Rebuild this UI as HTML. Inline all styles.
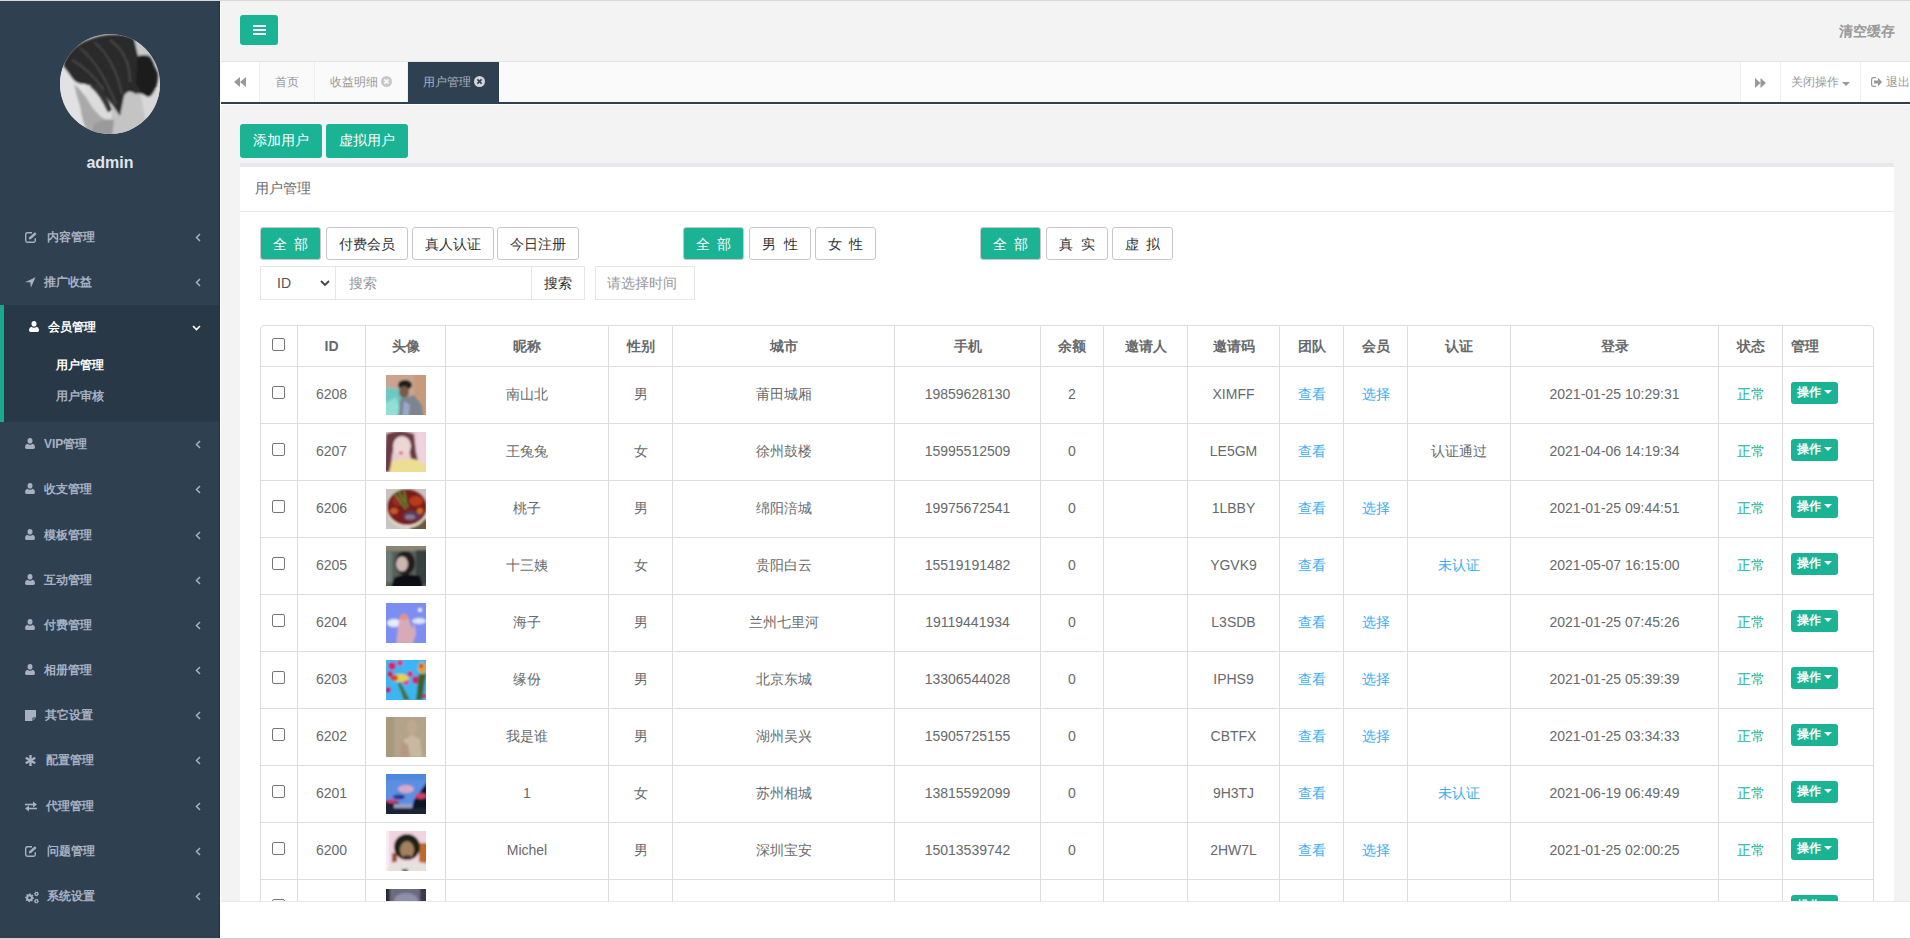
<!DOCTYPE html><html><head><meta charset="utf-8"><title>用户管理</title><style>
*{box-sizing:border-box}
html,body{margin:0;padding:0}
body{width:1910px;height:939px;overflow:hidden;position:relative;background:#f3f3f4;font-family:"Liberation Sans", sans-serif;color:#676a6c;font-size:14px}
#topline{position:absolute;left:0;top:0;width:1910px;height:1px;background:#d8d8d8}
#botline{position:absolute;left:0;top:938px;width:1910px;height:1px;background:#cdd1d8}
#side{position:absolute;left:0;top:1px;width:220px;height:937px;background:#2f4050;border-right:1px solid #26323f}
#avatar{position:absolute;left:60px;top:33px;width:100px;height:100px}
#uname{position:absolute;left:0;width:220px;top:152px;text-align:center;color:#dfe4ed;font-weight:bold;font-size:16px;line-height:20px}
.ni{position:absolute;left:0;width:219px;height:45px}
.ni .ic{position:absolute;top:17px;line-height:0}
.ni .nt{position:absolute;top:14px;font-size:12px;font-weight:bold;line-height:17px;white-space:nowrap}
#activebg{position:absolute;left:0;top:304px;width:219px;height:117px;background:#293846;border-left:4px solid #19aa8d}
.sub{position:absolute;left:56px;font-size:12px;line-height:17px;color:#a7b1c2;font-weight:bold}
#whitecol{position:absolute;left:220px;top:1px;width:1px;height:937px;background:#fff}
#header{position:absolute;left:221px;top:1px;width:1689px;height:61px;background:#f3f3f4;border-bottom:1px solid #e2e4e6}
#menubtn{position:absolute;left:240px;top:15px;width:38px;height:30px;background:#1ab394;border-radius:3px}
#menubtn i{position:absolute;left:13px;width:13px;height:2px;background:#fff}
#clear{position:absolute;left:1839px;top:22px;font-size:14px;color:#999;font-weight:bold;line-height:18px}
#tabs{position:absolute;left:221px;top:62px;width:1689px;height:42px;background:#fafafa;border-bottom:2px solid #2f4050}
.tab{position:absolute;top:0;height:40px;line-height:40px;font-size:12px;color:#999;border-right:1px solid #eee;white-space:nowrap}
#whiterow{position:absolute;left:221px;top:104px;width:1689px;height:1px;background:#fff}
.btn{position:absolute;height:33px;border:1px solid #c8c8c8;border-radius:3px;background:#fff;color:#333;text-align:center;line-height:31px;padding-top:1px;font-size:14px;white-space:nowrap}
.btn.g{background:#1ab394;border-color:#cbc6c6;color:#fff}
#ibox{position:absolute;left:240px;top:163px;width:1654px;height:800px;background:#fff;border-top:4px solid #e7eaec}
#ititle{position:absolute;left:255px;top:179px;font-size:14px;color:#676a6c;line-height:18px}
#tline{position:absolute;left:240px;top:211px;width:1654px;height:1px;background:#e7eaec}
.inp{position:absolute;top:266px;height:34px;border:1px solid #e5e6e7;background:#fff;font-size:14px;line-height:32px;white-space:nowrap}
#tframe{position:absolute;border:1px solid #dddddd;border-radius:4px}
.vl{position:absolute;width:1px;background:#dddddd}
.hl{position:absolute;height:1px;background:#dddddd}
.cell{position:absolute;text-align:center;font-size:14px;white-space:nowrap;color:#676a6c}
.cb{display:inline-block;width:13px;height:13px;border:1px solid #767676;border-radius:2px;background:#fff}
.opbtn{position:absolute;width:47px;height:22px;background:#1ab394;border-radius:3px;color:#fff;font-size:12px;font-weight:bold;line-height:20px;padding-left:6px;white-space:nowrap}
.caret{display:inline-block;width:0;height:0;border-top:4px solid #fff;border-left:4px solid transparent;border-right:4px solid transparent;vertical-align:middle;margin-left:3px;position:relative;top:-1px}
#footer{position:absolute;left:221px;top:901px;width:1689px;height:37px;background:#fff;border-top:1px solid #e7eaec}
</style></head><body>
<div id="topline"></div>
<div id="side">
<div id="avatar"><svg width="100" height="100" viewBox="0 0 100 100"><defs><clipPath id="pc"><circle cx="50" cy="50" r="50"/></clipPath><filter id="pb" x="-20%" y="-20%" width="140%" height="140%"><feGaussianBlur stdDeviation="0.9"/></filter></defs><g clip-path="url(#pc)"><rect width="100" height="100" fill="#dcdcdc"/><g filter="url(#pb)"><rect x="-5" y="30" width="30" height="75" fill="#e2e2e4"/><rect x="75" y="55" width="30" height="50" fill="#d8d8d8"/><path d="M14 50 Q22 56 30 70 Q40 86 52 88 L62 100 L30 104 Q22 88 20 72 Q16 60 14 50z" fill="#a9a9a9"/><path d="M50 58 L80 56 L86 90 L70 104 L44 104 Q56 88 50 58z" fill="#c4c4c4"/><path d="M34 90 Q44 84 54 86 L52 104 L30 104z" fill="#9a9a9a"/><path d="M3 32 Q8 10 40 2 Q76 -4 86 16 Q98 30 96 52 Q92 66 86 62 Q80 58 76 60 Q68 54 64 62 Q62 72 60 82 Q52 70 44 60 Q34 50 24 50 Q16 50 12 44 Q8 38 3 32z" fill="#2a2a2a"/><path d="M74 4 Q90 6 102 24 L100 30 Q90 18 78 22z" fill="#c8c8c8"/><path d="M78 22 Q92 22 98 40 Q98 58 88 62 Q80 60 76 48z" fill="#1c1c1c"/><path d="M30 52 Q40 60 48 78 L52 76 Q46 60 38 50z" fill="#303030"/><path d="M20 14 Q40 30 56 70 M34 8 Q54 24 62 60 M12 26 Q30 36 44 56 M50 6 Q70 20 70 48" fill="none" stroke="#4c4c4c" stroke-width="1.6"/></g></g></svg></div>
<div id="uname">admin</div>
<div class="ni" style="top:214.0px"><span class="ic" style="left:25px;top:17px"><svg width="13" height="11" viewBox="0 0 13 11"><path d="M7 0.7H2.4Q0.7 0.7 0.7 2.4V8.6Q0.7 10.3 2.4 10.3H8.6Q10.3 10.3 10.3 8.6V6.2" fill="none" stroke="#a7b1c2" stroke-width="1.4"/><path d="M3.8 7.6l0.5-2.3 5.5-5.1 1.8 1.8-5.5 5.1z" fill="#a7b1c2"/></svg></span><span class="nt" style="left:46.5px;color:#a7b1c2">内容管理</span><svg style="position:absolute;left:195px;top:18px" width="6" height="9" viewBox="0 0 6 9"><path d="M5 1L1.5 4.5 5 8" fill="none" stroke="#a7b1c2" stroke-width="1.5"/></svg></div>
<div class="ni" style="top:259.3px"><span class="ic" style="left:25px;top:17px"><svg width="11" height="11" viewBox="0 0 11 11"><path d="M10.5 0.2L0 5.2h5.3l0.6 5.6z" fill="#a7b1c2"/></svg></span><span class="nt" style="left:44px;color:#a7b1c2">推广收益</span><svg style="position:absolute;left:195px;top:18px" width="6" height="9" viewBox="0 0 6 9"><path d="M5 1L1.5 4.5 5 8" fill="none" stroke="#a7b1c2" stroke-width="1.5"/></svg></div>
<div id="activebg"></div>
<div class="ni" style="top:304.0px"><span class="ic" style="left:29px;top:16px"><svg width="10" height="11" viewBox="0 0 10 11"><ellipse cx="5" cy="2.8" rx="2.5" ry="2.8" fill="#fff"/><path d="M0 9.3Q0 6.3 2.2 5.7Q3.5 6.7 5 6.7Q6.5 6.7 7.8 5.7Q10 6.3 10 9.3Q10 11 8.4 11H1.6Q0 11 0 9.3z" fill="#fff"/></svg></span><span class="nt" style="left:48px;color:#fff">会员管理</span><svg style="position:absolute;left:192px;top:20px" width="9" height="6" viewBox="0 0 9 6"><path d="M1 1l3.5 3.5L8 1" fill="none" stroke="#fff" stroke-width="1.6"/></svg></div>
<div class="sub" style="top:356px;color:#fff;font-weight:bold">用户管理</div>
<div class="sub" style="top:387px">用户审核</div>
<div class="ni" style="top:421.2px"><span class="ic" style="left:25px;top:16px"><svg width="10" height="11" viewBox="0 0 10 11"><ellipse cx="5" cy="2.8" rx="2.5" ry="2.8" fill="#a7b1c2"/><path d="M0 9.3Q0 6.3 2.2 5.7Q3.5 6.7 5 6.7Q6.5 6.7 7.8 5.7Q10 6.3 10 9.3Q10 11 8.4 11H1.6Q0 11 0 9.3z" fill="#a7b1c2"/></svg></span><span class="nt" style="left:44px;color:#a7b1c2">VIP管理</span><svg style="position:absolute;left:195px;top:18px" width="6" height="9" viewBox="0 0 6 9"><path d="M5 1L1.5 4.5 5 8" fill="none" stroke="#a7b1c2" stroke-width="1.5"/></svg></div>
<div class="ni" style="top:466.4px"><span class="ic" style="left:25px;top:16px"><svg width="10" height="11" viewBox="0 0 10 11"><ellipse cx="5" cy="2.8" rx="2.5" ry="2.8" fill="#a7b1c2"/><path d="M0 9.3Q0 6.3 2.2 5.7Q3.5 6.7 5 6.7Q6.5 6.7 7.8 5.7Q10 6.3 10 9.3Q10 11 8.4 11H1.6Q0 11 0 9.3z" fill="#a7b1c2"/></svg></span><span class="nt" style="left:44px;color:#a7b1c2">收支管理</span><svg style="position:absolute;left:195px;top:18px" width="6" height="9" viewBox="0 0 6 9"><path d="M5 1L1.5 4.5 5 8" fill="none" stroke="#a7b1c2" stroke-width="1.5"/></svg></div>
<div class="ni" style="top:511.6px"><span class="ic" style="left:25px;top:16px"><svg width="10" height="11" viewBox="0 0 10 11"><ellipse cx="5" cy="2.8" rx="2.5" ry="2.8" fill="#a7b1c2"/><path d="M0 9.3Q0 6.3 2.2 5.7Q3.5 6.7 5 6.7Q6.5 6.7 7.8 5.7Q10 6.3 10 9.3Q10 11 8.4 11H1.6Q0 11 0 9.3z" fill="#a7b1c2"/></svg></span><span class="nt" style="left:44px;color:#a7b1c2">模板管理</span><svg style="position:absolute;left:195px;top:18px" width="6" height="9" viewBox="0 0 6 9"><path d="M5 1L1.5 4.5 5 8" fill="none" stroke="#a7b1c2" stroke-width="1.5"/></svg></div>
<div class="ni" style="top:556.7px"><span class="ic" style="left:25px;top:16px"><svg width="10" height="11" viewBox="0 0 10 11"><ellipse cx="5" cy="2.8" rx="2.5" ry="2.8" fill="#a7b1c2"/><path d="M0 9.3Q0 6.3 2.2 5.7Q3.5 6.7 5 6.7Q6.5 6.7 7.8 5.7Q10 6.3 10 9.3Q10 11 8.4 11H1.6Q0 11 0 9.3z" fill="#a7b1c2"/></svg></span><span class="nt" style="left:44px;color:#a7b1c2">互动管理</span><svg style="position:absolute;left:195px;top:18px" width="6" height="9" viewBox="0 0 6 9"><path d="M5 1L1.5 4.5 5 8" fill="none" stroke="#a7b1c2" stroke-width="1.5"/></svg></div>
<div class="ni" style="top:601.9px"><span class="ic" style="left:25px;top:16px"><svg width="10" height="11" viewBox="0 0 10 11"><ellipse cx="5" cy="2.8" rx="2.5" ry="2.8" fill="#a7b1c2"/><path d="M0 9.3Q0 6.3 2.2 5.7Q3.5 6.7 5 6.7Q6.5 6.7 7.8 5.7Q10 6.3 10 9.3Q10 11 8.4 11H1.6Q0 11 0 9.3z" fill="#a7b1c2"/></svg></span><span class="nt" style="left:44px;color:#a7b1c2">付费管理</span><svg style="position:absolute;left:195px;top:18px" width="6" height="9" viewBox="0 0 6 9"><path d="M5 1L1.5 4.5 5 8" fill="none" stroke="#a7b1c2" stroke-width="1.5"/></svg></div>
<div class="ni" style="top:647.0px"><span class="ic" style="left:25px;top:16px"><svg width="10" height="11" viewBox="0 0 10 11"><ellipse cx="5" cy="2.8" rx="2.5" ry="2.8" fill="#a7b1c2"/><path d="M0 9.3Q0 6.3 2.2 5.7Q3.5 6.7 5 6.7Q6.5 6.7 7.8 5.7Q10 6.3 10 9.3Q10 11 8.4 11H1.6Q0 11 0 9.3z" fill="#a7b1c2"/></svg></span><span class="nt" style="left:44px;color:#a7b1c2">相册管理</span><svg style="position:absolute;left:195px;top:18px" width="6" height="9" viewBox="0 0 6 9"><path d="M5 1L1.5 4.5 5 8" fill="none" stroke="#a7b1c2" stroke-width="1.5"/></svg></div>
<div class="ni" style="top:692.2px"><span class="ic" style="left:25px;top:17px"><svg width="11" height="11" viewBox="0 0 11 11"><path d="M0 0h11v7.6L7.6 11H0z" fill="#a7b1c2"/><path d="M7.9 11V7.9H11" fill="none" stroke="#2f4050" stroke-width="0.9"/></svg></span><span class="nt" style="left:45px;color:#a7b1c2">其它设置</span><svg style="position:absolute;left:195px;top:18px" width="6" height="9" viewBox="0 0 6 9"><path d="M5 1L1.5 4.5 5 8" fill="none" stroke="#a7b1c2" stroke-width="1.5"/></svg></div>
<div class="ni" style="top:737.3px"><span class="ic" style="left:25px;top:17px"><svg width="11" height="11" viewBox="0 0 11 11"><g stroke="#a7b1c2" stroke-width="2.4"><path d="M5.5 0v11"/><path d="M0.8 2.8l9.4 5.4"/><path d="M0.8 8.2l9.4-5.4"/></g></svg></span><span class="nt" style="left:45.5px;color:#a7b1c2">配置管理</span><svg style="position:absolute;left:195px;top:18px" width="6" height="9" viewBox="0 0 6 9"><path d="M5 1L1.5 4.5 5 8" fill="none" stroke="#a7b1c2" stroke-width="1.5"/></svg></div>
<div class="ni" style="top:782.5px"><span class="ic" style="left:25px;top:17px"><svg width="12" height="11" viewBox="0 0 12 11"><path d="M0 3.5h9" stroke="#a7b1c2" stroke-width="1.6"/><path d="M8 0.5l4 3-4 3z" fill="#a7b1c2"/><path d="M12 7.5h-9" stroke="#a7b1c2" stroke-width="1.6"/><path d="M4 4.5l-4 3 4 3z" fill="#a7b1c2"/></svg></span><span class="nt" style="left:46.3px;color:#a7b1c2">代理管理</span><svg style="position:absolute;left:195px;top:18px" width="6" height="9" viewBox="0 0 6 9"><path d="M5 1L1.5 4.5 5 8" fill="none" stroke="#a7b1c2" stroke-width="1.5"/></svg></div>
<div class="ni" style="top:827.6px"><span class="ic" style="left:25px;top:17px"><svg width="13" height="11" viewBox="0 0 13 11"><path d="M7 0.7H2.4Q0.7 0.7 0.7 2.4V8.6Q0.7 10.3 2.4 10.3H8.6Q10.3 10.3 10.3 8.6V6.2" fill="none" stroke="#a7b1c2" stroke-width="1.4"/><path d="M3.8 7.6l0.5-2.3 5.5-5.1 1.8 1.8-5.5 5.1z" fill="#a7b1c2"/></svg></span><span class="nt" style="left:46.5px;color:#a7b1c2">问题管理</span><svg style="position:absolute;left:195px;top:18px" width="6" height="9" viewBox="0 0 6 9"><path d="M5 1L1.5 4.5 5 8" fill="none" stroke="#a7b1c2" stroke-width="1.5"/></svg></div>
<div class="ni" style="top:872.8px"><span class="ic" style="left:25px;top:17px"><svg width="14" height="13" viewBox="0 0 14.2 12.6"><path fill-rule="evenodd" d="M9.20 6.60 L9.11 7.50 L7.83 7.94 L7.51 8.54 L7.85 9.85 L7.16 10.42 L5.94 9.83 L5.28 10.03 L4.60 11.20 L3.70 11.11 L3.26 9.83 L2.66 9.51 L1.35 9.85 L0.78 9.16 L1.37 7.94 L1.17 7.28 L0.00 6.60 L0.09 5.70 L1.37 5.26 L1.69 4.66 L1.35 3.35 L2.04 2.78 L3.26 3.37 L3.92 3.17 L4.60 2.00 L5.50 2.09 L5.94 3.37 L6.54 3.69 L7.85 3.35 L8.42 4.04 L7.83 5.26 L8.03 5.92Z M6.00 6.60 A1.4 1.4 0 1 0 3.20 6.60 A1.4 1.4 0 1 0 6.00 6.60Z M14.20 2.60 L14.11 3.27 L13.25 3.55 L12.94 3.94 L12.90 4.85 L12.27 5.11 L11.60 4.50 L11.11 4.44 L10.30 4.85 L9.76 4.44 L9.95 3.55 L9.76 3.09 L9.00 2.60 L9.09 1.93 L9.95 1.65 L10.26 1.26 L10.30 0.35 L10.93 0.09 L11.60 0.70 L12.09 0.76 L12.90 0.35 L13.44 0.76 L13.25 1.65 L13.44 2.11Z M12.40 2.60 A0.8 0.8 0 1 0 10.80 2.60 A0.8 0.8 0 1 0 12.40 2.60Z M14.20 10.00 L14.11 10.67 L13.25 10.95 L12.94 11.34 L12.90 12.25 L12.27 12.51 L11.60 11.90 L11.11 11.84 L10.30 12.25 L9.76 11.84 L9.95 10.95 L9.76 10.49 L9.00 10.00 L9.09 9.33 L9.95 9.05 L10.26 8.66 L10.30 7.75 L10.93 7.49 L11.60 8.10 L12.09 8.16 L12.90 7.75 L13.44 8.16 L13.25 9.05 L13.44 9.51Z M12.40 10.00 A0.8 0.8 0 1 0 10.80 10.00 A0.8 0.8 0 1 0 12.40 10.00Z" fill="#a7b1c2"/></svg></span><span class="nt" style="left:47.4px;color:#a7b1c2">系统设置</span><svg style="position:absolute;left:195px;top:18px" width="6" height="9" viewBox="0 0 6 9"><path d="M5 1L1.5 4.5 5 8" fill="none" stroke="#a7b1c2" stroke-width="1.5"/></svg></div>
</div>
<div id="whitecol"></div>
<div id="header"></div>
<div id="menubtn"><i style="top:10px"></i><i style="top:14px"></i><i style="top:18px"></i></div>
<div id="clear">清空缓存</div>
<div id="tabs">
<div class="tab" style="left:0;width:39px;background:#fff;border-right:1px solid #eee;text-align:center"><svg style="position:absolute;left:13px;top:15px" width="12" height="10" viewBox="0 0 12 10"><path d="M6 0L0 5l6 5zM12 0L6 5l6 5z" fill="#999"/></svg></div>
<div class="tab" style="left:39px;width:55px;padding-left:15px">首页</div>
<div class="tab" style="left:94px;width:93px;padding-left:15px">收益明细</div><svg style="position:absolute;left:160px;top:14px" width="11" height="11" viewBox="0 0 12 12"><circle cx="6" cy="6" r="6" fill="#c8c8c8"/><path d="M3.7 3.7l4.6 4.6M8.3 3.7l-4.6 4.6" stroke="#fafafa" stroke-width="1.7"/></svg>
<div class="tab" style="left:187px;width:91px;padding-left:15px;background:#2f4050;color:#a7b1c2;border-right:0">用户管理</div><svg style="position:absolute;left:253px;top:14px" width="11" height="11" viewBox="0 0 12 12"><circle cx="6" cy="6" r="6" fill="#d2d4d8"/><path d="M3.7 3.7l4.6 4.6M8.3 3.7l-4.6 4.6" stroke="#2f4050" stroke-width="1.7"/></svg>
<div class="tab" style="left:1519px;width:40px;background:#fff;border-left:1px solid #eee;border-right:0"><svg style="position:absolute;left:14px;top:16px" width="11" height="10" viewBox="0 0 11 10"><path d="M0 0l5.5 5-5.5 5zM5.5 0l5.5 5-5.5 5z" fill="#999"/></svg></div>
<div class="tab" style="left:1559px;width:80px;background:#fff;border-left:1px solid #eee;border-right:0;padding-left:10px">关闭操作<span class="caret" style="border-top-color:#999;margin-left:3px;top:1px"></span></div>
<div class="tab" style="left:1639px;width:50px;background:#fff;border-left:1px solid #eee;border-right:0;padding-left:25px">退出</div><svg style="position:absolute;left:1650px;top:15px" width="12" height="10" viewBox="0 0 12 10"><path d="M5 0.6H2.2Q0.6 0.6 0.6 2.2V7.8Q0.6 9.4 2.2 9.4H5" fill="none" stroke="#999" stroke-width="1.2"/><path d="M3 3.6H7V0.4L11 5 7 9.6V6.4H3z" fill="#999"/></svg>
</div>
<div id="whiterow"></div>
<div class="btn g" style="left:240px;top:124px;width:82px;height:34px;line-height:33px;padding-top:0;border:0">添加用户</div>
<div class="btn g" style="left:326px;top:124px;width:82px;height:34px;line-height:33px;padding-top:0;border:0">虚拟用户</div>
<div id="ibox"></div><div id="ititle">用户管理</div><div id="tline"></div>
<div class="btn g" style="left:260px;top:227px;width:61px">全&nbsp;&nbsp;部</div>
<div class="btn" style="left:326px;top:227px;width:82px">付费会员</div>
<div class="btn" style="left:412px;top:227px;width:82px">真人认证</div>
<div class="btn" style="left:497px;top:227px;width:82px">今日注册</div>
<div class="btn g" style="left:683px;top:227px;width:61px">全&nbsp;&nbsp;部</div>
<div class="btn" style="left:749px;top:227px;width:62px">男&nbsp;&nbsp;性</div>
<div class="btn" style="left:815px;top:227px;width:61px">女&nbsp;&nbsp;性</div>
<div class="btn g" style="left:980px;top:227px;width:61px">全&nbsp;&nbsp;部</div>
<div class="btn" style="left:1046px;top:227px;width:62px">真&nbsp;&nbsp;实</div>
<div class="btn" style="left:1112px;top:227px;width:61px">虚&nbsp;&nbsp;拟</div>
<div class="inp" style="left:260px;width:76px;padding-left:16px;color:#555">ID<svg style="position:absolute;left:59px;top:13px" width="10" height="7" viewBox="0 0 10 7"><path d="M1 1l4 4 4-4" fill="none" stroke="#444" stroke-width="1.8"/></svg></div>
<div class="inp" style="left:335px;width:197px;padding-left:13px;color:#999">搜索</div>
<div class="inp" style="left:531px;width:54px;text-align:center;color:#333">搜索</div>
<div class="inp" style="left:595px;width:100px;padding-left:11px;color:#999">请选择时间</div>
<div id="tframe" style="left:260px;top:325px;width:1614px;height:586px"></div>
<div class="vl" style="left:297px;top:325px;height:576px"></div>
<div class="vl" style="left:365px;top:325px;height:576px"></div>
<div class="vl" style="left:445px;top:325px;height:576px"></div>
<div class="vl" style="left:608px;top:325px;height:576px"></div>
<div class="vl" style="left:672px;top:325px;height:576px"></div>
<div class="vl" style="left:894px;top:325px;height:576px"></div>
<div class="vl" style="left:1040px;top:325px;height:576px"></div>
<div class="vl" style="left:1103px;top:325px;height:576px"></div>
<div class="vl" style="left:1187px;top:325px;height:576px"></div>
<div class="vl" style="left:1279px;top:325px;height:576px"></div>
<div class="vl" style="left:1343px;top:325px;height:576px"></div>
<div class="vl" style="left:1407px;top:325px;height:576px"></div>
<div class="vl" style="left:1510px;top:325px;height:576px"></div>
<div class="vl" style="left:1718px;top:325px;height:576px"></div>
<div class="vl" style="left:1782px;top:325px;height:576px"></div>
<div class="hl" style="left:260px;top:366px;width:1613px"></div>
<div class="hl" style="left:260px;top:423px;width:1613px"></div>
<div class="hl" style="left:260px;top:480px;width:1613px"></div>
<div class="hl" style="left:260px;top:537px;width:1613px"></div>
<div class="hl" style="left:260px;top:594px;width:1613px"></div>
<div class="hl" style="left:260px;top:651px;width:1613px"></div>
<div class="hl" style="left:260px;top:708px;width:1613px"></div>
<div class="hl" style="left:260px;top:765px;width:1613px"></div>
<div class="hl" style="left:260px;top:822px;width:1613px"></div>
<div class="hl" style="left:260px;top:879px;width:1613px"></div>
<span class="cb" style="position:absolute;left:272px;top:338px"></span>
<div class="cell" style="left:261px;width:36px;top:326px;height:40px;line-height:40px;font-weight:bold;color:#676a6c"></div>
<div class="cell" style="left:298px;width:67px;top:326px;height:40px;line-height:40px;font-weight:bold;color:#676a6c">ID</div>
<div class="cell" style="left:366px;width:79px;top:326px;height:40px;line-height:40px;font-weight:bold;color:#676a6c">头像</div>
<div class="cell" style="left:446px;width:162px;top:326px;height:40px;line-height:40px;font-weight:bold;color:#676a6c">昵称</div>
<div class="cell" style="left:609px;width:63px;top:326px;height:40px;line-height:40px;font-weight:bold;color:#676a6c">性别</div>
<div class="cell" style="left:673px;width:221px;top:326px;height:40px;line-height:40px;font-weight:bold;color:#676a6c">城市</div>
<div class="cell" style="left:895px;width:145px;top:326px;height:40px;line-height:40px;font-weight:bold;color:#676a6c">手机</div>
<div class="cell" style="left:1041px;width:62px;top:326px;height:40px;line-height:40px;font-weight:bold;color:#676a6c">余额</div>
<div class="cell" style="left:1104px;width:83px;top:326px;height:40px;line-height:40px;font-weight:bold;color:#676a6c">邀请人</div>
<div class="cell" style="left:1188px;width:91px;top:326px;height:40px;line-height:40px;font-weight:bold;color:#676a6c">邀请码</div>
<div class="cell" style="left:1280px;width:63px;top:326px;height:40px;line-height:40px;font-weight:bold;color:#676a6c">团队</div>
<div class="cell" style="left:1344px;width:63px;top:326px;height:40px;line-height:40px;font-weight:bold;color:#676a6c">会员</div>
<div class="cell" style="left:1408px;width:102px;top:326px;height:40px;line-height:40px;font-weight:bold;color:#676a6c">认证</div>
<div class="cell" style="left:1511px;width:207px;top:326px;height:40px;line-height:40px;font-weight:bold;color:#676a6c">登录</div>
<div class="cell" style="left:1719px;width:63px;top:326px;height:40px;line-height:40px;font-weight:bold;color:#676a6c">状态</div>
<div class="cell" style="left:1791px;width:82px;top:326px;height:40px;line-height:40px;text-align:left;font-weight:bold;color:#676a6c">管理</div>
<span class="cb" style="position:absolute;left:272px;top:386px"></span>
<div class="cell" style="left:298px;width:67px;top:366px;height:56px;line-height:56px;">6208</div>
<div style="position:absolute;left:386px;top:375px;width:40px;height:40px"><svg width="40" height="40" viewBox="0 0 40 40"><defs><filter id="ba1" x="-10%" y="-10%" width="120%" height="120%"><feGaussianBlur stdDeviation="1.2"/></filter><clipPath id="ca1"><rect width="40" height="40"/></clipPath></defs><g clip-path="url(#ca1)"><g filter="url(#ba1)"><rect x="-4" y="-4" width="48" height="48" fill="#c9a591"/><rect x="28" y="-4" width="16" height="48" fill="#c89a7c"/><path d="M-4 12 L14 14 L20 26 L14 44 L-4 44z" fill="#6cc8c0"/><path d="M-4 30 L10 22 L16 40 L-4 44z" fill="#8fe0d6"/><ellipse cx="19" cy="10" rx="7" ry="5" fill="#1c1c1e"/><ellipse cx="18" cy="17" rx="5" ry="6" fill="#7a5a4a"/><path d="M14 24 L28 20 L36 30 L38 44 L12 44z" fill="#7f8590"/><path d="M18 26 L24 30 L22 44 L16 44z" fill="#9aa8d0"/></g></g></svg></div>
<div class="cell" style="left:446px;width:162px;top:366px;height:56px;line-height:56px;">南山北</div>
<div class="cell" style="left:609px;width:63px;top:366px;height:56px;line-height:56px;">男</div>
<div class="cell" style="left:673px;width:221px;top:366px;height:56px;line-height:56px;">莆田城厢</div>
<div class="cell" style="left:895px;width:145px;top:366px;height:56px;line-height:56px;">19859628130</div>
<div class="cell" style="left:1041px;width:62px;top:366px;height:56px;line-height:56px;">2</div>
<div class="cell" style="left:1188px;width:91px;top:366px;height:56px;line-height:56px;">XIMFF</div>
<div class="cell" style="left:1280px;width:63px;top:366px;height:56px;line-height:56px;color:#39aef5">查看</div>
<div class="cell" style="left:1344px;width:63px;top:366px;height:56px;line-height:56px;color:#39aef5">选择</div>
<div class="cell" style="left:1511px;width:207px;top:366px;height:56px;line-height:56px;">2021-01-25 10:29:31</div>
<div class="cell" style="left:1719px;width:63px;top:366px;height:56px;line-height:56px;color:#1ab394">正常</div>
<div class="opbtn" style="left:1791px;top:382px">操作<span class="caret"></span></div>
<span class="cb" style="position:absolute;left:272px;top:443px"></span>
<div class="cell" style="left:298px;width:67px;top:423px;height:56px;line-height:56px;">6207</div>
<div style="position:absolute;left:386px;top:432px;width:40px;height:40px"><svg width="40" height="40" viewBox="0 0 40 40"><defs><filter id="ba2" x="-10%" y="-10%" width="120%" height="120%"><feGaussianBlur stdDeviation="1.2"/></filter><clipPath id="ca2"><rect width="40" height="40"/></clipPath></defs><g clip-path="url(#ca2)"><g filter="url(#ba2)"><rect x="-4" y="-4" width="48" height="48" fill="#e9cbd6"/><rect x="30" y="-4" width="14" height="48" fill="#efd2de"/><path d="M0 2 Q14 -4 28 2 L30 20 L34 38 L28 40 L24 22 Q22 8 14 8 Q8 10 6 24 L4 40 L-2 40z" fill="#6a3a42"/><ellipse cx="16" cy="14" rx="9" ry="10" fill="#ecd6d4"/><ellipse cx="15" cy="21" rx="2.2" ry="1.3" fill="#d23c3c"/><path d="M2 44 L6 30 Q18 24 32 28 L40 34 L42 44z" fill="#ecdf94"/></g></g></svg></div>
<div class="cell" style="left:446px;width:162px;top:423px;height:56px;line-height:56px;">王兔兔</div>
<div class="cell" style="left:609px;width:63px;top:423px;height:56px;line-height:56px;">女</div>
<div class="cell" style="left:673px;width:221px;top:423px;height:56px;line-height:56px;">徐州鼓楼</div>
<div class="cell" style="left:895px;width:145px;top:423px;height:56px;line-height:56px;">15995512509</div>
<div class="cell" style="left:1041px;width:62px;top:423px;height:56px;line-height:56px;">0</div>
<div class="cell" style="left:1188px;width:91px;top:423px;height:56px;line-height:56px;">LE5GM</div>
<div class="cell" style="left:1280px;width:63px;top:423px;height:56px;line-height:56px;color:#39aef5">查看</div>
<div class="cell" style="left:1408px;width:102px;top:423px;height:56px;line-height:56px;">认证通过</div>
<div class="cell" style="left:1511px;width:207px;top:423px;height:56px;line-height:56px;">2021-04-06 14:19:34</div>
<div class="cell" style="left:1719px;width:63px;top:423px;height:56px;line-height:56px;color:#1ab394">正常</div>
<div class="opbtn" style="left:1791px;top:439px">操作<span class="caret"></span></div>
<span class="cb" style="position:absolute;left:272px;top:500px"></span>
<div class="cell" style="left:298px;width:67px;top:480px;height:56px;line-height:56px;">6206</div>
<div style="position:absolute;left:386px;top:489px;width:40px;height:40px"><svg width="40" height="40" viewBox="0 0 40 40"><defs><filter id="ba3" x="-10%" y="-10%" width="120%" height="120%"><feGaussianBlur stdDeviation="1.2"/></filter><clipPath id="ca3"><rect width="40" height="40"/></clipPath></defs><g clip-path="url(#ca3)"><g filter="url(#ba3)"><rect x="-4" y="-4" width="48" height="48" fill="#c8c4c0"/><rect x="24" y="30" width="20" height="14" fill="#6a5840"/><ellipse cx="21" cy="19" rx="21" ry="20" fill="#e8dccc"/><ellipse cx="21" cy="18" rx="20" ry="18" fill="#7a1c1e"/><ellipse cx="12" cy="12" rx="6" ry="5" fill="#9a2a22"/><ellipse cx="30" cy="12" rx="7" ry="5" fill="#b83a1e"/><ellipse cx="26" cy="27" rx="9" ry="5" fill="#5a3a58"/><ellipse cx="24" cy="28" rx="5" ry="2.5" fill="#8a7a98"/><ellipse cx="8" cy="22" rx="4" ry="3" fill="#c85a28"/><ellipse cx="34" cy="22" rx="3" ry="3" fill="#d06a20"/><path d="M8 4 L20 20 M12 2 L22 18 M18 2 L20 14" stroke="#4a9030" stroke-width="1.6"/></g></g></svg></div>
<div class="cell" style="left:446px;width:162px;top:480px;height:56px;line-height:56px;">桃子</div>
<div class="cell" style="left:609px;width:63px;top:480px;height:56px;line-height:56px;">男</div>
<div class="cell" style="left:673px;width:221px;top:480px;height:56px;line-height:56px;">绵阳涪城</div>
<div class="cell" style="left:895px;width:145px;top:480px;height:56px;line-height:56px;">19975672541</div>
<div class="cell" style="left:1041px;width:62px;top:480px;height:56px;line-height:56px;">0</div>
<div class="cell" style="left:1188px;width:91px;top:480px;height:56px;line-height:56px;">1LBBY</div>
<div class="cell" style="left:1280px;width:63px;top:480px;height:56px;line-height:56px;color:#39aef5">查看</div>
<div class="cell" style="left:1344px;width:63px;top:480px;height:56px;line-height:56px;color:#39aef5">选择</div>
<div class="cell" style="left:1511px;width:207px;top:480px;height:56px;line-height:56px;">2021-01-25 09:44:51</div>
<div class="cell" style="left:1719px;width:63px;top:480px;height:56px;line-height:56px;color:#1ab394">正常</div>
<div class="opbtn" style="left:1791px;top:496px">操作<span class="caret"></span></div>
<span class="cb" style="position:absolute;left:272px;top:557px"></span>
<div class="cell" style="left:298px;width:67px;top:537px;height:56px;line-height:56px;">6205</div>
<div style="position:absolute;left:386px;top:546px;width:40px;height:40px"><svg width="40" height="40" viewBox="0 0 40 40"><defs><filter id="ba4" x="-10%" y="-10%" width="120%" height="120%"><feGaussianBlur stdDeviation="1.2"/></filter><clipPath id="ca4"><rect width="40" height="40"/></clipPath></defs><g clip-path="url(#ca4)"><g filter="url(#ba4)"><rect x="-4" y="-4" width="48" height="48" fill="#56605a"/><rect x="-4" y="-4" width="48" height="9" fill="#8a8672"/><rect x="-4" y="6" width="10" height="30" fill="#6c7a78"/><rect x="30" y="4" width="14" height="34" fill="#39403f"/><ellipse cx="19" cy="17" rx="10" ry="12" fill="#201c1d"/><ellipse cx="16" cy="18" rx="6" ry="7.5" fill="#cdb5b0"/><path d="M4 44 L8 32 Q18 26 34 30 L38 44z" fill="#0f1012"/></g></g></svg></div>
<div class="cell" style="left:446px;width:162px;top:537px;height:56px;line-height:56px;">十三姨</div>
<div class="cell" style="left:609px;width:63px;top:537px;height:56px;line-height:56px;">女</div>
<div class="cell" style="left:673px;width:221px;top:537px;height:56px;line-height:56px;">贵阳白云</div>
<div class="cell" style="left:895px;width:145px;top:537px;height:56px;line-height:56px;">15519191482</div>
<div class="cell" style="left:1041px;width:62px;top:537px;height:56px;line-height:56px;">0</div>
<div class="cell" style="left:1188px;width:91px;top:537px;height:56px;line-height:56px;">YGVK9</div>
<div class="cell" style="left:1280px;width:63px;top:537px;height:56px;line-height:56px;color:#39aef5">查看</div>
<div class="cell" style="left:1408px;width:102px;top:537px;height:56px;line-height:56px;color:#39aef5">未认证</div>
<div class="cell" style="left:1511px;width:207px;top:537px;height:56px;line-height:56px;">2021-05-07 16:15:00</div>
<div class="cell" style="left:1719px;width:63px;top:537px;height:56px;line-height:56px;color:#1ab394">正常</div>
<div class="opbtn" style="left:1791px;top:553px">操作<span class="caret"></span></div>
<span class="cb" style="position:absolute;left:272px;top:614px"></span>
<div class="cell" style="left:298px;width:67px;top:594px;height:56px;line-height:56px;">6204</div>
<div style="position:absolute;left:386px;top:603px;width:40px;height:40px"><svg width="40" height="40" viewBox="0 0 40 40"><defs><filter id="ba5" x="-10%" y="-10%" width="120%" height="120%"><feGaussianBlur stdDeviation="1.2"/></filter><clipPath id="ca5"><rect width="40" height="40"/></clipPath></defs><g clip-path="url(#ca5)"><g filter="url(#ba5)"><rect x="-4" y="-4" width="48" height="48" fill="#7d8ef2"/><ellipse cx="8" cy="20" rx="7" ry="4" fill="#e8ecfa"/><ellipse cx="33" cy="18" rx="7" ry="3" fill="#dde4fa"/><circle cx="34" cy="7" r="2" fill="#f2f4ff"/><path d="M10 44 L12 24 L14 14 Q18 10 22 14 L26 26 L28 20 L30 30 L26 44z" fill="#d8aab8"/><ellipse cx="18" cy="14" rx="4" ry="3" fill="#e8907a"/></g></g></svg></div>
<div class="cell" style="left:446px;width:162px;top:594px;height:56px;line-height:56px;">海子</div>
<div class="cell" style="left:609px;width:63px;top:594px;height:56px;line-height:56px;">男</div>
<div class="cell" style="left:673px;width:221px;top:594px;height:56px;line-height:56px;">兰州七里河</div>
<div class="cell" style="left:895px;width:145px;top:594px;height:56px;line-height:56px;">19119441934</div>
<div class="cell" style="left:1041px;width:62px;top:594px;height:56px;line-height:56px;">0</div>
<div class="cell" style="left:1188px;width:91px;top:594px;height:56px;line-height:56px;">L3SDB</div>
<div class="cell" style="left:1280px;width:63px;top:594px;height:56px;line-height:56px;color:#39aef5">查看</div>
<div class="cell" style="left:1344px;width:63px;top:594px;height:56px;line-height:56px;color:#39aef5">选择</div>
<div class="cell" style="left:1511px;width:207px;top:594px;height:56px;line-height:56px;">2021-01-25 07:45:26</div>
<div class="cell" style="left:1719px;width:63px;top:594px;height:56px;line-height:56px;color:#1ab394">正常</div>
<div class="opbtn" style="left:1791px;top:610px">操作<span class="caret"></span></div>
<span class="cb" style="position:absolute;left:272px;top:671px"></span>
<div class="cell" style="left:298px;width:67px;top:651px;height:56px;line-height:56px;">6203</div>
<div style="position:absolute;left:386px;top:660px;width:40px;height:40px"><svg width="40" height="40" viewBox="0 0 40 40"><defs><filter id="ba6" x="-10%" y="-10%" width="120%" height="120%"><feGaussianBlur stdDeviation="1.2"/></filter><clipPath id="ca6"><rect width="40" height="40"/></clipPath></defs><g clip-path="url(#ca6)"><g filter="url(#ba6)"><rect x="-4" y="-4" width="48" height="48" fill="#3ab6f2"/><circle cx="6" cy="6" r="4" fill="#c42a80"/><circle cx="14" cy="3" r="3" fill="#d03a8a"/><circle cx="4" cy="14" r="3" fill="#b82070"/><circle cx="24" cy="14" r="3" fill="#c8308a"/><circle cx="30" cy="20" r="4" fill="#c0287a"/><circle cx="20" cy="22" r="3" fill="#d04090"/><circle cx="2" cy="30" r="3" fill="#b02070"/><circle cx="38" cy="36" r="2.5" fill="#c02878"/><ellipse cx="14" cy="18" rx="9" ry="4" fill="#e6d050"/><ellipse cx="8" cy="18" rx="4" ry="3" fill="#d04820"/><path d="M14 22 L24 40 L18 40 L12 24z" fill="#4a7020"/><ellipse cx="36" cy="8" rx="4" ry="6" fill="#e0a030"/><ellipse cx="35" cy="6" rx="2" ry="2" fill="#d04020"/><path d="M33 14 L40 14 L36 40 L30 40z" fill="#3a6420"/></g></g></svg></div>
<div class="cell" style="left:446px;width:162px;top:651px;height:56px;line-height:56px;">缘份</div>
<div class="cell" style="left:609px;width:63px;top:651px;height:56px;line-height:56px;">男</div>
<div class="cell" style="left:673px;width:221px;top:651px;height:56px;line-height:56px;">北京东城</div>
<div class="cell" style="left:895px;width:145px;top:651px;height:56px;line-height:56px;">13306544028</div>
<div class="cell" style="left:1041px;width:62px;top:651px;height:56px;line-height:56px;">0</div>
<div class="cell" style="left:1188px;width:91px;top:651px;height:56px;line-height:56px;">IPHS9</div>
<div class="cell" style="left:1280px;width:63px;top:651px;height:56px;line-height:56px;color:#39aef5">查看</div>
<div class="cell" style="left:1344px;width:63px;top:651px;height:56px;line-height:56px;color:#39aef5">选择</div>
<div class="cell" style="left:1511px;width:207px;top:651px;height:56px;line-height:56px;">2021-01-25 05:39:39</div>
<div class="cell" style="left:1719px;width:63px;top:651px;height:56px;line-height:56px;color:#1ab394">正常</div>
<div class="opbtn" style="left:1791px;top:667px">操作<span class="caret"></span></div>
<span class="cb" style="position:absolute;left:272px;top:728px"></span>
<div class="cell" style="left:298px;width:67px;top:708px;height:56px;line-height:56px;">6202</div>
<div style="position:absolute;left:386px;top:717px;width:40px;height:40px"><svg width="40" height="40" viewBox="0 0 40 40"><defs><filter id="ba7" x="-10%" y="-10%" width="120%" height="120%"><feGaussianBlur stdDeviation="1.2"/></filter><clipPath id="ca7"><rect width="40" height="40"/></clipPath></defs><g clip-path="url(#ca7)"><g filter="url(#ba7)"><rect x="-4" y="-4" width="48" height="48" fill="#b3a38a"/><rect x="-4" y="-4" width="12" height="48" fill="#a8987c"/><ellipse cx="26" cy="10" rx="5" ry="8" fill="#c0a890"/><path d="M14 40 L18 22 L26 18 L34 22 L36 40z" fill="#c8b8a0"/><path d="M16 24 L22 28 L24 40 L14 40z" fill="#b89880"/></g></g></svg></div>
<div class="cell" style="left:446px;width:162px;top:708px;height:56px;line-height:56px;">我是谁</div>
<div class="cell" style="left:609px;width:63px;top:708px;height:56px;line-height:56px;">男</div>
<div class="cell" style="left:673px;width:221px;top:708px;height:56px;line-height:56px;">湖州吴兴</div>
<div class="cell" style="left:895px;width:145px;top:708px;height:56px;line-height:56px;">15905725155</div>
<div class="cell" style="left:1041px;width:62px;top:708px;height:56px;line-height:56px;">0</div>
<div class="cell" style="left:1188px;width:91px;top:708px;height:56px;line-height:56px;">CBTFX</div>
<div class="cell" style="left:1280px;width:63px;top:708px;height:56px;line-height:56px;color:#39aef5">查看</div>
<div class="cell" style="left:1344px;width:63px;top:708px;height:56px;line-height:56px;color:#39aef5">选择</div>
<div class="cell" style="left:1511px;width:207px;top:708px;height:56px;line-height:56px;">2021-01-25 03:34:33</div>
<div class="cell" style="left:1719px;width:63px;top:708px;height:56px;line-height:56px;color:#1ab394">正常</div>
<div class="opbtn" style="left:1791px;top:724px">操作<span class="caret"></span></div>
<span class="cb" style="position:absolute;left:272px;top:785px"></span>
<div class="cell" style="left:298px;width:67px;top:765px;height:56px;line-height:56px;">6201</div>
<div style="position:absolute;left:386px;top:774px;width:40px;height:40px"><svg width="40" height="40" viewBox="0 0 40 40"><defs><filter id="ba8" x="-10%" y="-10%" width="120%" height="120%"><feGaussianBlur stdDeviation="1.2"/></filter><clipPath id="ca8"><rect width="40" height="40"/></clipPath></defs><g clip-path="url(#ca8)"><g filter="url(#ba8)"><rect x="-4" y="-4" width="48" height="48" fill="#5b8fe2"/><rect x="-4" y="-4" width="48" height="10" fill="#4f86de"/><path d="M44 4 L28 26 L24 44 L44 44z" fill="#0e1628"/><path d="M-4 26 L12 28 L22 44 L-4 44z" fill="#1a2234"/><ellipse cx="20" cy="15" rx="8" ry="4" fill="#d8a8c8"/><ellipse cx="13" cy="23" rx="6" ry="2.5" fill="#203a90"/><ellipse cx="35" cy="22" rx="6" ry="3" fill="#d0406a"/><ellipse cx="6" cy="27" rx="6" ry="2" fill="#c84070"/><rect x="8" y="30" width="18" height="5" fill="#9aa0c0"/><rect x="-4" y="34" width="48" height="10" fill="#1c2438"/></g></g></svg></div>
<div class="cell" style="left:446px;width:162px;top:765px;height:56px;line-height:56px;">1</div>
<div class="cell" style="left:609px;width:63px;top:765px;height:56px;line-height:56px;">女</div>
<div class="cell" style="left:673px;width:221px;top:765px;height:56px;line-height:56px;">苏州相城</div>
<div class="cell" style="left:895px;width:145px;top:765px;height:56px;line-height:56px;">13815592099</div>
<div class="cell" style="left:1041px;width:62px;top:765px;height:56px;line-height:56px;">0</div>
<div class="cell" style="left:1188px;width:91px;top:765px;height:56px;line-height:56px;">9H3TJ</div>
<div class="cell" style="left:1280px;width:63px;top:765px;height:56px;line-height:56px;color:#39aef5">查看</div>
<div class="cell" style="left:1408px;width:102px;top:765px;height:56px;line-height:56px;color:#39aef5">未认证</div>
<div class="cell" style="left:1511px;width:207px;top:765px;height:56px;line-height:56px;">2021-06-19 06:49:49</div>
<div class="cell" style="left:1719px;width:63px;top:765px;height:56px;line-height:56px;color:#1ab394">正常</div>
<div class="opbtn" style="left:1791px;top:781px">操作<span class="caret"></span></div>
<span class="cb" style="position:absolute;left:272px;top:842px"></span>
<div class="cell" style="left:298px;width:67px;top:822px;height:56px;line-height:56px;">6200</div>
<div style="position:absolute;left:386px;top:831px;width:40px;height:40px"><svg width="40" height="40" viewBox="0 0 40 40"><defs><filter id="ba9" x="-10%" y="-10%" width="120%" height="120%"><feGaussianBlur stdDeviation="1.2"/></filter><clipPath id="ca9"><rect width="40" height="40"/></clipPath></defs><g clip-path="url(#ca9)"><g filter="url(#ba9)"><rect x="-4" y="-4" width="48" height="48" fill="#f0d4e0"/><rect x="-4" y="-4" width="7" height="48" fill="#f8ecf4"/><rect x="33" y="12" width="11" height="20" fill="#c06a2c"/><rect x="6" y="22" width="5" height="10" fill="#9a5030"/><ellipse cx="21" cy="16" rx="13" ry="13" fill="#1c2016"/><ellipse cx="21" cy="19" rx="7" ry="9" fill="#a48060"/><ellipse cx="21" cy="26" rx="4" ry="2" fill="#503020"/><path d="M0 44 L4 32 Q20 27 38 32 L42 44z" fill="#e8e0dc"/><rect x="16" y="38" width="6" height="3" fill="#2a4a6a"/></g></g></svg></div>
<div class="cell" style="left:446px;width:162px;top:822px;height:56px;line-height:56px;">Michel</div>
<div class="cell" style="left:609px;width:63px;top:822px;height:56px;line-height:56px;">男</div>
<div class="cell" style="left:673px;width:221px;top:822px;height:56px;line-height:56px;">深圳宝安</div>
<div class="cell" style="left:895px;width:145px;top:822px;height:56px;line-height:56px;">15013539742</div>
<div class="cell" style="left:1041px;width:62px;top:822px;height:56px;line-height:56px;">0</div>
<div class="cell" style="left:1188px;width:91px;top:822px;height:56px;line-height:56px;">2HW7L</div>
<div class="cell" style="left:1280px;width:63px;top:822px;height:56px;line-height:56px;color:#39aef5">查看</div>
<div class="cell" style="left:1344px;width:63px;top:822px;height:56px;line-height:56px;color:#39aef5">选择</div>
<div class="cell" style="left:1511px;width:207px;top:822px;height:56px;line-height:56px;">2021-01-25 02:00:25</div>
<div class="cell" style="left:1719px;width:63px;top:822px;height:56px;line-height:56px;color:#1ab394">正常</div>
<div class="opbtn" style="left:1791px;top:838px">操作<span class="caret"></span></div>
<span class="cb" style="position:absolute;left:272px;top:899px"></span>
<div style="position:absolute;left:386px;top:889px;width:40px;height:40px"><svg width="40" height="40" viewBox="0 0 40 40"><defs><filter id="ba10" x="-10%" y="-10%" width="120%" height="120%"><feGaussianBlur stdDeviation="1.2"/></filter><clipPath id="ca10"><rect width="40" height="40"/></clipPath></defs><g clip-path="url(#ca10)"><g filter="url(#ba10)"><rect x="-4" y="-4" width="48" height="48" fill="#6a6c80"/><rect x="-4" y="-4" width="8" height="48" fill="#2a2a34"/><rect x="34" y="-4" width="10" height="48" fill="#3a3a46"/><ellipse cx="20" cy="12" rx="12" ry="8" fill="#9090a8"/></g></g></svg></div>
<div class="opbtn" style="left:1791px;top:895px">操作<span class="caret"></span></div>
<div id="footer"></div>
<div id="botline"></div>
</body></html>
